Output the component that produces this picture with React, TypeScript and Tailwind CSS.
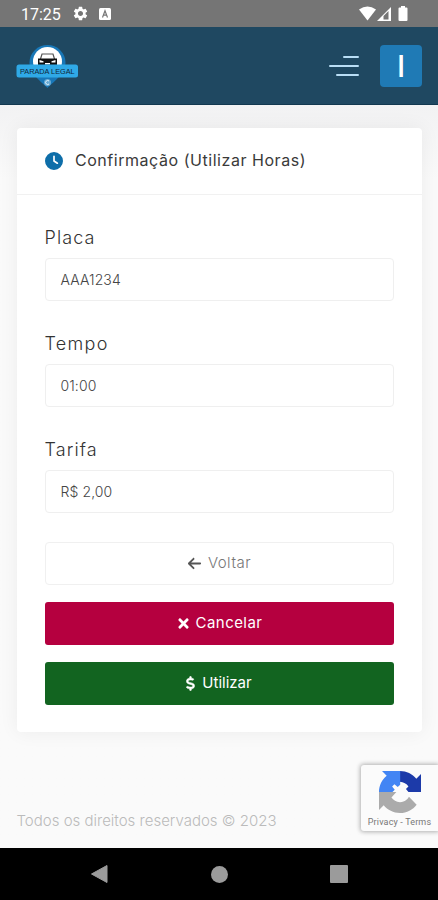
import React from 'react';
import { FaArrowLeft, FaClock, FaDollarSign } from 'react-icons/fa6';
import { FaTimes } from 'react-icons/fa';
import { MdSettings } from 'react-icons/md';

interface FieldProps {
  label: string;
  value: string;
  labelClass: string;
  valueClass: string;
}

const Field: React.FC<FieldProps> = ({ label, value, labelClass, valueClass }) => (
  <div className="h-[106.2px]">
    <label className={`block h-[33px] text-[18px] leading-[25px] font-light text-[#333333] ${labelClass}`}>
      {label}
    </label>
    <div className={`h-[43px] rounded-[4px] border border-[#efefef] px-[15px] text-[14px] leading-[41px] font-light text-[#444444] ${valueClass}`}>
      {value}
    </div>
  </div>
);

const Logo: React.FC = () => (
  <svg width="64" height="46" viewBox="0 0 64 46" aria-label="Parada Legal">
    <path d="M32.500 45C28 40 14.500 31 14.500 19.500A18 17.500 0 0 1 50.500 19.500C50.500 31 37 40 32.500 45Z" fill="#1877b7" />
    <circle cx="32.500" cy="18.500" r="14.500" fill="#fff" />
    {/* Car */}
    <path d="M25.500 16l1.500-5h11l1.500 5" stroke="#555" strokeWidth="1.200" fill="none" />
    <path d="M23 15.500h19v6.500H23z" fill="#111" />
    <path d="M24.500 17l4 1.200v1.300h-4zM40.500 17l-4 1.200v1.300h4zM30 20h5v1.500h-5z" fill="#fff" />
    <rect x="1.500" y="21.500" width="61.500" height="13" rx="2.500" fill="#2fa9e7" />
    <text x="32.300" y="30.700" textAnchor="middle" fontFamily="Liberation Sans, sans-serif" fontSize="7.300" fill="#10283a">PARADA LEGAL</text>
    <circle cx="32.500" cy="39.500" r="3.500" fill="#69abd4" />
    <path d="M34 38a2 2 0 1 0 0 3" stroke="#e5f3fc" strokeWidth="1" fill="none" />
  </svg>
);

const StatusBar: React.FC = () => (
  <div className="flex h-[27px] items-center bg-[#757575] pr-[28px] pl-[21px] text-white">
    <span className="w-[51px] pt-px font-['Roboto',sans-serif] text-[16px] leading-[27px]">17:25</span>
    <MdSettings size={17} />
    <svg className="ml-[10px]" width="12" height="12" viewBox="0 0 12 12">
      <rect width="12" height="12" rx="1.500" fill="#fff" />
      <path d="M3.500 9.500L6 2.800l2.500 6.700M4.500 7.200h3" stroke="#777" strokeWidth="1.200" fill="none" />
    </svg>
    <svg className="ml-auto" width="51" height="17" viewBox="0 0 51 17">
      <path d="M0 4.500Q8.500-1.500 17 4.500L8.500 15.500z" fill="#fff" />
      <path d="M18 16L32 2v14z" fill="#fff" />
      <path d="M24.500 14.500v-3.500l5-5v8.500z" fill="#757575" />
      <path d="M42 1h4v1.500h1.500q1 0 1 1V15q0 1-1 1h-7q-1 0-1-1V3.500q0-1 1-1H42z" fill="#fff" />
    </svg>
  </div>
);

const Header: React.FC = () => (
  <header className="flex h-[78px] items-center border-b border-[#12384f] bg-[#1f4861] pr-[16px] pl-[15px]">
    <Logo />
    <svg className="ml-auto" width="30" height="22" viewBox="0 0 30 22">
      <path d="M15 2h14M1 11h28M8 20h21" stroke="#b9def5" strokeWidth="2" strokeLinecap="round" />
    </svg>
    <div className="ml-[21px] flex h-[42px] w-[42px] items-center justify-center rounded-[4px] bg-[#1f7ab5] font-['Inter',sans-serif] text-[30px] leading-none font-medium text-white">
      I
    </div>
  </header>
);

const Recaptcha: React.FC = () => (
  <div className="absolute right-0 bottom-[17px] flex h-[66px] w-[77px] flex-col items-center rounded-l-[3px] bg-[#fbfbfb] pt-[6px] shadow-[0_0_4px_1px_#b0b0b0]">
    <svg width="42" height="42" viewBox="0 0 64 64">
      <path d="M64 31.955V4.687l-7.160 7.160C50.948 4.674 42.033.093 32.050.093L31.500 16.500c6 .2 10.600 3 13.400 7.200l-3.800 3.800 3.800 4.455z" fill="#1c3aa9" />
      <path d="M32.300.094L4.594.125l7.160 7.160C4.580 13.147 0 22.060 0 32.046h20.500l3.500-3.500-4-5 3.500-3.500 5 4.500 3.800-3.500z" fill="#4285f4" />
      <path d="M0 32.045v27.268l7.160-7.160c5.860 7.173 14.774 11.754 24.760 11.754 10.400 0 19.622-4.960 25.458-12.640L45.676 39.407a15.550 15.550 0 0 1-4.754 5.334c-2.050 1.600-4.952 2.906-8.968 2.906-5.500-.3-10.200-3.200-13-7.300l7.500-8.302z" fill="#ababab" />
    </svg>
    <span className="mt-[3px] font-['Roboto',sans-serif] text-[9px] leading-[12px] tracking-[0.15px] whitespace-nowrap text-[#777777]">Privacy - Terms</span>
  </div>
);

const NavigationBar: React.FC = () => (
  <nav className="flex h-[52px] items-center justify-between bg-black pr-[90px] pl-[90px]">
    <svg width="18" height="20" viewBox="0 0 18 20">
      <path d="M1.500 10L17 1.500v17z" fill="#9b9b9b" stroke="#9b9b9b" strokeLinejoin="round" />
    </svg>
    <div className="h-[17px] w-[17px] rounded-full bg-[#9b9b9b]" />
    <div className="h-[18px] w-[18px] rounded-[1px] bg-[#9b9b9b]" />
  </nav>
);

const App: React.FC = () => {
  return (
    <div className="flex h-[900px] w-[438px] flex-col overflow-hidden bg-[#fafafa] font-['Inter',sans-serif]">
      <StatusBar />
      <Header />

      <main className="relative flex-1 bg-linear-to-b from-[#f2f2f3] from-0% to-[#fafafa] to-10% px-[16.5px] pt-[23px]">
        <section className="h-[604px] rounded-[4px] bg-white shadow-[0_0_20px_rgba(0,0,0,0.06)]">
          <div className="flex h-[67px] items-center border-b border-[#f1f1f1] px-[28.5px]">
            <FaClock size={18} className="text-[#0e6ea9]" />
            <h1 className="ml-[12px] pb-[2px] text-[16px] tracking-[0.54px] whitespace-nowrap text-[#3a3a3a]">
              Confirmação (Utilizar Horas)
            </h1>
          </div>

          <div className="px-[28px] pt-[30px]">
            <Field label="Placa" value="AAA1234" labelClass="tracking-[1.1px]" valueClass="tracking-[0.1px]" />
            <Field label="Tempo" value="01:00" labelClass="tracking-[1.3px]" valueClass="tracking-[0.1px]" />
            <Field label="Tarifa" value="R$ 2,00" labelClass="tracking-[1.1px]" valueClass="tracking-[0.1px]" />

            <div className="mt-[-2px] flex flex-col gap-[17.500px] text-[15px]">
              <button className="flex h-[43px] items-center justify-center gap-[6px] rounded-[4px] border border-[#f0f0f0] font-light tracking-[0.5px] text-[#777777]">
                <FaArrowLeft size={15} className="text-[#555555]" /> Voltar
              </button>
              <button className="flex h-[42.500px] items-center justify-center gap-[5px] rounded-[3px] bg-[#b5003f] tracking-[0.45px] text-white">
                <FaTimes size={15} /> Cancelar
              </button>
              <button className="flex h-[42.500px] items-center justify-center gap-[7px] rounded-[3px] bg-[#126420] text-white">
                <FaDollarSign size={15} strokeWidth={20} className="w-[9px]" stroke="currentColor" /> Utilizar
              </button>
            </div>
          </div>
        </section>

        <footer className="mt-[77.500px] text-[15px] leading-[22px] font-light whitespace-nowrap text-[#bbbbbb]">
          Todos os direitos reservados © 2023
        </footer>
        <Recaptcha />
      </main>

      <NavigationBar />
    </div>
  );
};

export default App;
